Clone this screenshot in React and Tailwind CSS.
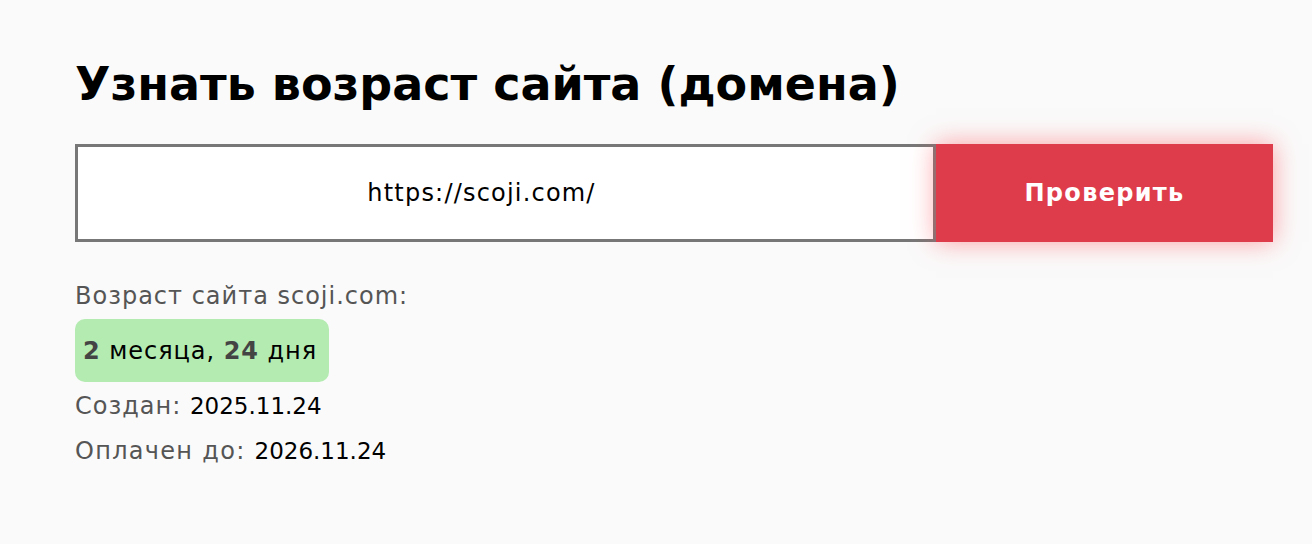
export default function App() {
  return (
    <div className="min-h-[544px] bg-[#fafafa] font-['DejaVu_Sans',sans-serif] text-black">
      <div className="pl-[75px] pr-[39px] pt-[52px]">
        <h1 className="text-[46px] font-bold leading-[64px]">
          Узнать возраст сайта (домена)
        </h1>

        <form className="mt-[28px] flex h-[98px]" onSubmit={(e) => e.preventDefault()}>
          <input
            type="text"
            defaultValue="https://scoji.com/"
            className="h-full w-[861px] border-[3px] border-[#777777] bg-white pr-[48px] text-center text-[24px] tracking-[1.2px] text-black outline-none"
          />
          <button
            type="submit"
            className="h-full flex-1 bg-[#df3c4b] text-[24px] font-bold tracking-[1.3px] text-white shadow-[0_0_24px_rgba(255,80,90,0.55)]"
          >
            Проверить
          </button>
        </form>

        <div className="mt-[38px] text-[24px] text-[#555555]">
          <div className="leading-[32px] tracking-[1px]">Возраст сайта scoji.com:</div>
          <div className="mt-[7px] inline-flex h-[63px] items-center rounded-[10px] bg-[#b3ebb0] pl-[8px] pr-[12px] tracking-[0.95px] text-black">
            <b className="text-[#444444]">2</b>&nbsp;месяца,&nbsp;<b className="text-[#444444]">24</b>&nbsp;дня
          </div>
          <div className="mt-[8px] leading-[32px]">
            <span className="tracking-[1px]">Создан: </span>
            <span className="text-[23px] text-black">2025.11.24</span>
          </div>
          <div className="mt-[13px] leading-[32px]">
            <span className="tracking-[1.3px]">Оплачен до: </span>
            <span className="text-[23px] text-black">2026.11.24</span>
          </div>
        </div>
      </div>
    </div>
  );
}
